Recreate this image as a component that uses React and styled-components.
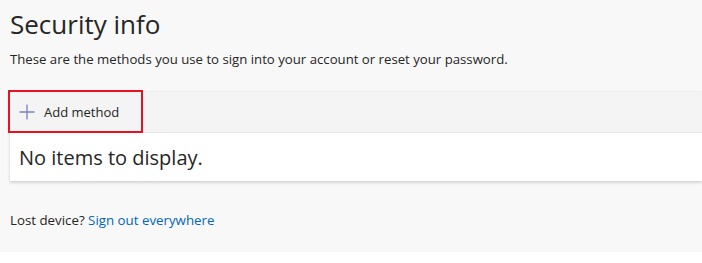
import styled, { createGlobalStyle } from "styled-components";

const GlobalStyle = createGlobalStyle`
  html, body {
    margin: 0;
    padding: 0;
    background: #ffffff;
  }
  body {
    font-family: "Segoe UI", "Open Sans", "Liberation Sans", sans-serif;
    color: #323130;
  }
`;

const Page = styled.main`
  background: #f8f8f8;
  height: 252px;
  padding: 0 0 0 10px;
  box-sizing: border-box;
  overflow: hidden;
`;

const Title = styled.h1`
  margin: 0;
  padding-top: 6px;
  font-size: 26px;
  font-weight: 400;
  line-height: 36px;
  color: #262626;
`;

const Subtitle = styled.p`
  margin: 8px 0 0;
  font-size: 13.2px;
  line-height: 18px;
  color: #262626;
`;

const Card = styled.section`
  margin-top: 23px;
  background: #ffffff;
  box-shadow: 0 1.5px 3px rgba(0, 0, 0, 0.18);
`;

const Toolbar = styled.div`
  display: flex;
  align-items: stretch;
  height: 40px;
  background: #f4f4f4;
  border-top: 1px solid #efefef;
  border-bottom: 1px solid #e6e6e6;
`;

const AddButton = styled.button`
  display: flex;
  align-items: center;
  gap: 9px;
  margin: -2px 0 -1px -2px;
  padding: 0 22px 0 9px;
  border: 2px solid #e81123;
  background: transparent;
  font-family: inherit;
  font-size: 13px;
  color: #262626;
  cursor: pointer;
`;

const Empty = styled.div`
  padding: 0 9px;
  height: 48px;
  display: flex;
  align-items: center;
  font-size: 20px;
  color: #262626;
`;

const Footer = styled.p`
  margin: 30px 0 0;
  font-size: 13.3px;
  line-height: 18px;
  color: #262626;
`;

const Link = styled.a`
  color: #0067b8;
  text-decoration: none;
`;

function PlusIcon() {
  return (
    <svg width="16" height="16" viewBox="0 0 16 16">
      <path d="M8 0.5V15.5M0.5 8H15.5" stroke="#7f7fc9" strokeWidth="1.3" fill="none" />
    </svg>
  );
}

export default function App() {
  return (
    <>
      <GlobalStyle />
      <Page>
        <Title>Security info</Title>
        <Subtitle>
          These are the methods you use to sign into your account or reset your password.
        </Subtitle>
        <Card>
          <Toolbar>
            <AddButton>
              <PlusIcon />
              <span>Add method</span>
            </AddButton>
          </Toolbar>
          <Empty>No items to display.</Empty>
        </Card>
        <Footer>
          Lost device? <Link href="#">Sign out everywhere</Link>
        </Footer>
      </Page>
    </>
  );
}
